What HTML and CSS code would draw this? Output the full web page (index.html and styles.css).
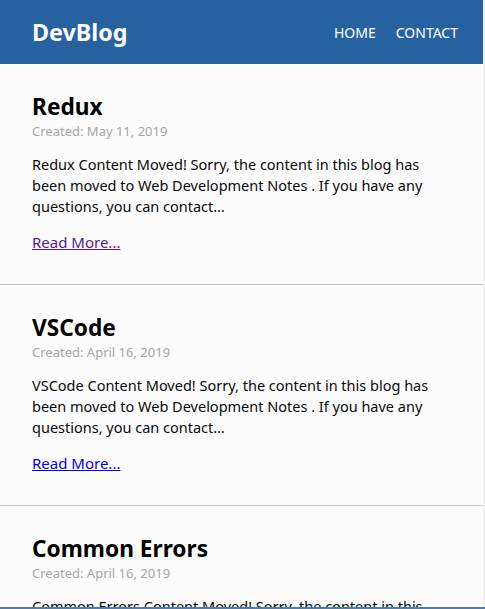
FILE: index.html
```html
<!DOCTYPE html>
<html>
<head>
<meta charset="utf-8">
<link rel="stylesheet" href="styles.css">
</head>
<body>
<div class="page">
  <header class="topbar">
    <div class="logo">DevBlog</div>
    <nav class="nav">
      <a href="#" class="nav-link">HOME</a>
      <a href="#" class="nav-link">CONTACT</a>
    </nav>
  </header>
  <main class="posts">
    <article class="post">
      <h2 class="post-title">Redux</h2>
      <div class="post-date">Created: May 11, 2019</div>
      <p class="post-excerpt">Redux Content Moved! Sorry, the content in this blog has been moved to Web Development Notes . If you have any questions, you can contact…</p>
      <a class="read-more visited" href="#">Read More...</a>
    </article>
    <article class="post">
      <h2 class="post-title">VSCode</h2>
      <div class="post-date">Created: April 16, 2019</div>
      <p class="post-excerpt">VSCode Content Moved! Sorry, the content in this blog has been moved to Web Development Notes . If you have any questions, you can contact…</p>
      <a class="read-more" href="#">Read More...</a>
    </article>
    <article class="post">
      <h2 class="post-title">Common Errors</h2>
      <div class="post-date">Created: April 16, 2019</div>
      <p class="post-excerpt">Common Errors Content Moved! Sorry, the content in this blog has been moved to Web Development Notes . If you have any questions, you can contact…</p>
      <a class="read-more" href="#">Read More...</a>
    </article>
  </main>
</div>
<div class="bottom-edge"></div>
</body>
</html>
```
FILE: styles.css
```css
html, body {
  margin: 0;
  padding: 0;
  height: 100%;
  overflow: hidden;
}
body {
  background: #f0f0f0;
  font-family: "Noto Sans", "Open Sans", sans-serif;
}
.page {
  width: 483px;
  background: #fcfcfc;
  min-height: 100%;
}
.topbar {
  height: 64px;
  background: #25629f;
  display: flex;
  align-items: center;
  justify-content: space-between;
  padding: 0 25px 0 32px;
  box-sizing: border-box;
}
.logo {
  color: #fff;
  font-size: 23.3px;
  font-weight: 700;
  line-height: 30px;
}
.nav {
  display: flex;
  gap: 20px;
}
.nav-link {
  color: #fff;
  text-decoration: none;
  font-size: 14px;
}
.post {
  padding: 28px 32px 31px;
  border-bottom: 1px solid #c3c6cc;
}
.post-title {
  margin: 0;
  font-size: 22.7px;
  font-weight: 700;
  line-height: 30px;
  color: #000;
}
.post-date {
  font-size: 13px;
  line-height: 18px;
  color: #a6a6a6;
}
.post-excerpt {
  margin: 14px 0 14px;
  font-size: 14.5px;
  line-height: 21px;
  color: #0a0a0a;
}
.read-more {
  font-size: 15px;
  line-height: 21px;
  color: #0000ee;
}
.read-more.visited {
  color: #551a8b;
}
.bottom-edge {
  position: fixed;
  left: 0;
  right: 0;
  bottom: 0;
  height: 2px;
  background: #4f7ba6;
}
```
